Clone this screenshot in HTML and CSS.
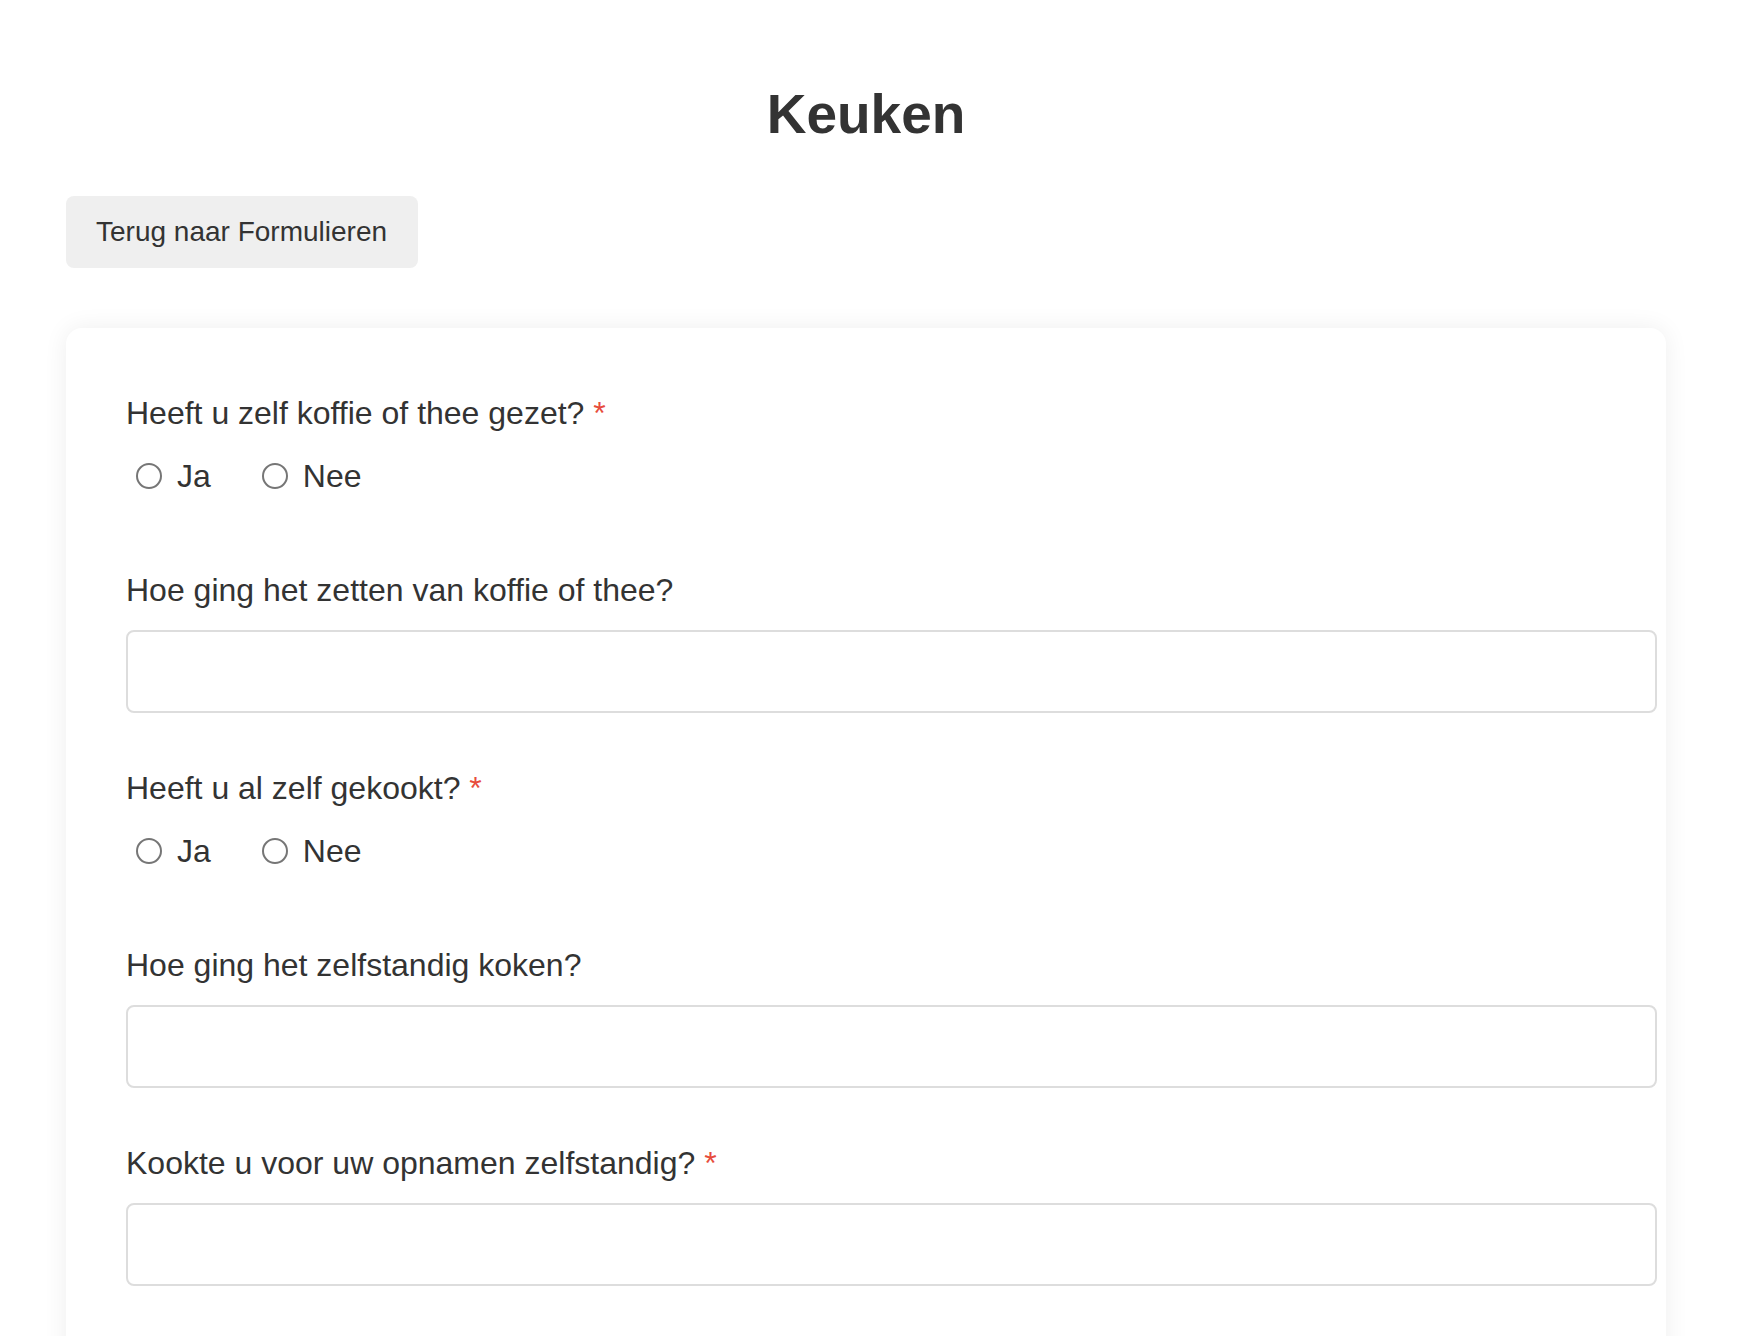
FILE: index.html
```html
<!DOCTYPE html>
<html lang="nl">
<head>
<meta charset="utf-8">
<title>Keuken</title>
<link rel="stylesheet" href="styles.css">
</head>
<body>
<div class="page">
  <h1 class="title">Keuken</h1>
  <button class="back-btn" type="button">Terug naar Formulieren</button>
  <form class="card">
    <div class="field">
      <div class="label">Heeft u zelf koffie of thee gezet? <span class="req">*</span></div>
      <div class="radio-row">
        <label class="option"><input type="radio" name="q1" class="radio">Ja</label>
        <label class="option"><input type="radio" name="q1" class="radio">Nee</label>
      </div>
    </div>
    <div class="field">
      <div class="label">Hoe ging het zetten van koffie of thee?</div>
      <input type="text" class="text-input">
    </div>
    <div class="field">
      <div class="label">Heeft u al zelf gekookt? <span class="req">*</span></div>
      <div class="radio-row">
        <label class="option"><input type="radio" name="q2" class="radio">Ja</label>
        <label class="option"><input type="radio" name="q2" class="radio">Nee</label>
      </div>
    </div>
    <div class="field">
      <div class="label">Hoe ging het zelfstandig koken?</div>
      <input type="text" class="text-input">
    </div>
    <div class="field">
      <div class="label">Kookte u voor uw opnamen zelfstandig? <span class="req">*</span></div>
      <input type="text" class="text-input">
    </div>
  </form>
</div>
</body>
</html>
```
FILE: styles.css
```css
html, body {
  margin: 0;
  padding: 0;
  background: #ffffff;
}

body {
  font-family: "Liberation Sans", Arial, Helvetica, sans-serif;
  color: #333333;
}

.page {
  width: 1600px;
  margin-left: 66px;
  padding-top: 82px;
}

.title {
  margin: 0 0 50px 0;
  font-size: 55px;
  line-height: 64px;
  font-weight: bold;
  text-align: center;
  color: #333333;
}

.back-btn {
  display: block;
  height: 72px;
  padding: 0 31px 0 30px;
  border: none;
  border-radius: 8px;
  background: #efefef;
  color: #333333;
  font-family: "Liberation Sans", Arial, sans-serif;
  font-size: 28px;
  line-height: 32px;
  margin: 0 0 60px 0;
  cursor: pointer;
}

.card {
  background: #ffffff;
  border-radius: 16px;
  box-shadow: 0 0 24px rgba(0, 0, 0, 0.07);
  padding: 67px 9px 80px 60px;
  display: flex;
  flex-direction: column;
}

.field {
  display: flex;
  flex-direction: column;
  margin-bottom: 57px;
}

.label {
  font-size: 32px;
  line-height: 37px;
  margin-bottom: 21px;
  color: #333333;
}

.req {
  color: #e74c3c;
}

.radio-row {
  display: flex;
  align-items: center;
  gap: 41px;
  margin-top: 5px;
  margin-bottom: 21px;
  height: 36px;
}

.option {
  display: inline-flex;
  align-items: center;
  font-size: 32px;
  line-height: 36px;
  color: #333333;
}

.radio {
  appearance: none;
  -webkit-appearance: none;
  box-sizing: border-box;
  width: 26px;
  height: 26px;
  margin: 0 15px 0 10px;
  border: 2px solid #767676;
  border-radius: 50%;
  background: #ffffff;
}

.text-input {
  display: block;
  box-sizing: border-box;
  width: 100%;
  height: 83px;
  border: 2px solid #dddddd;
  border-radius: 8px;
  background: #ffffff;
  font-family: "Liberation Sans", Arial, sans-serif;
  font-size: 32px;
  padding: 0 24px;
  margin: 0;
}
```
